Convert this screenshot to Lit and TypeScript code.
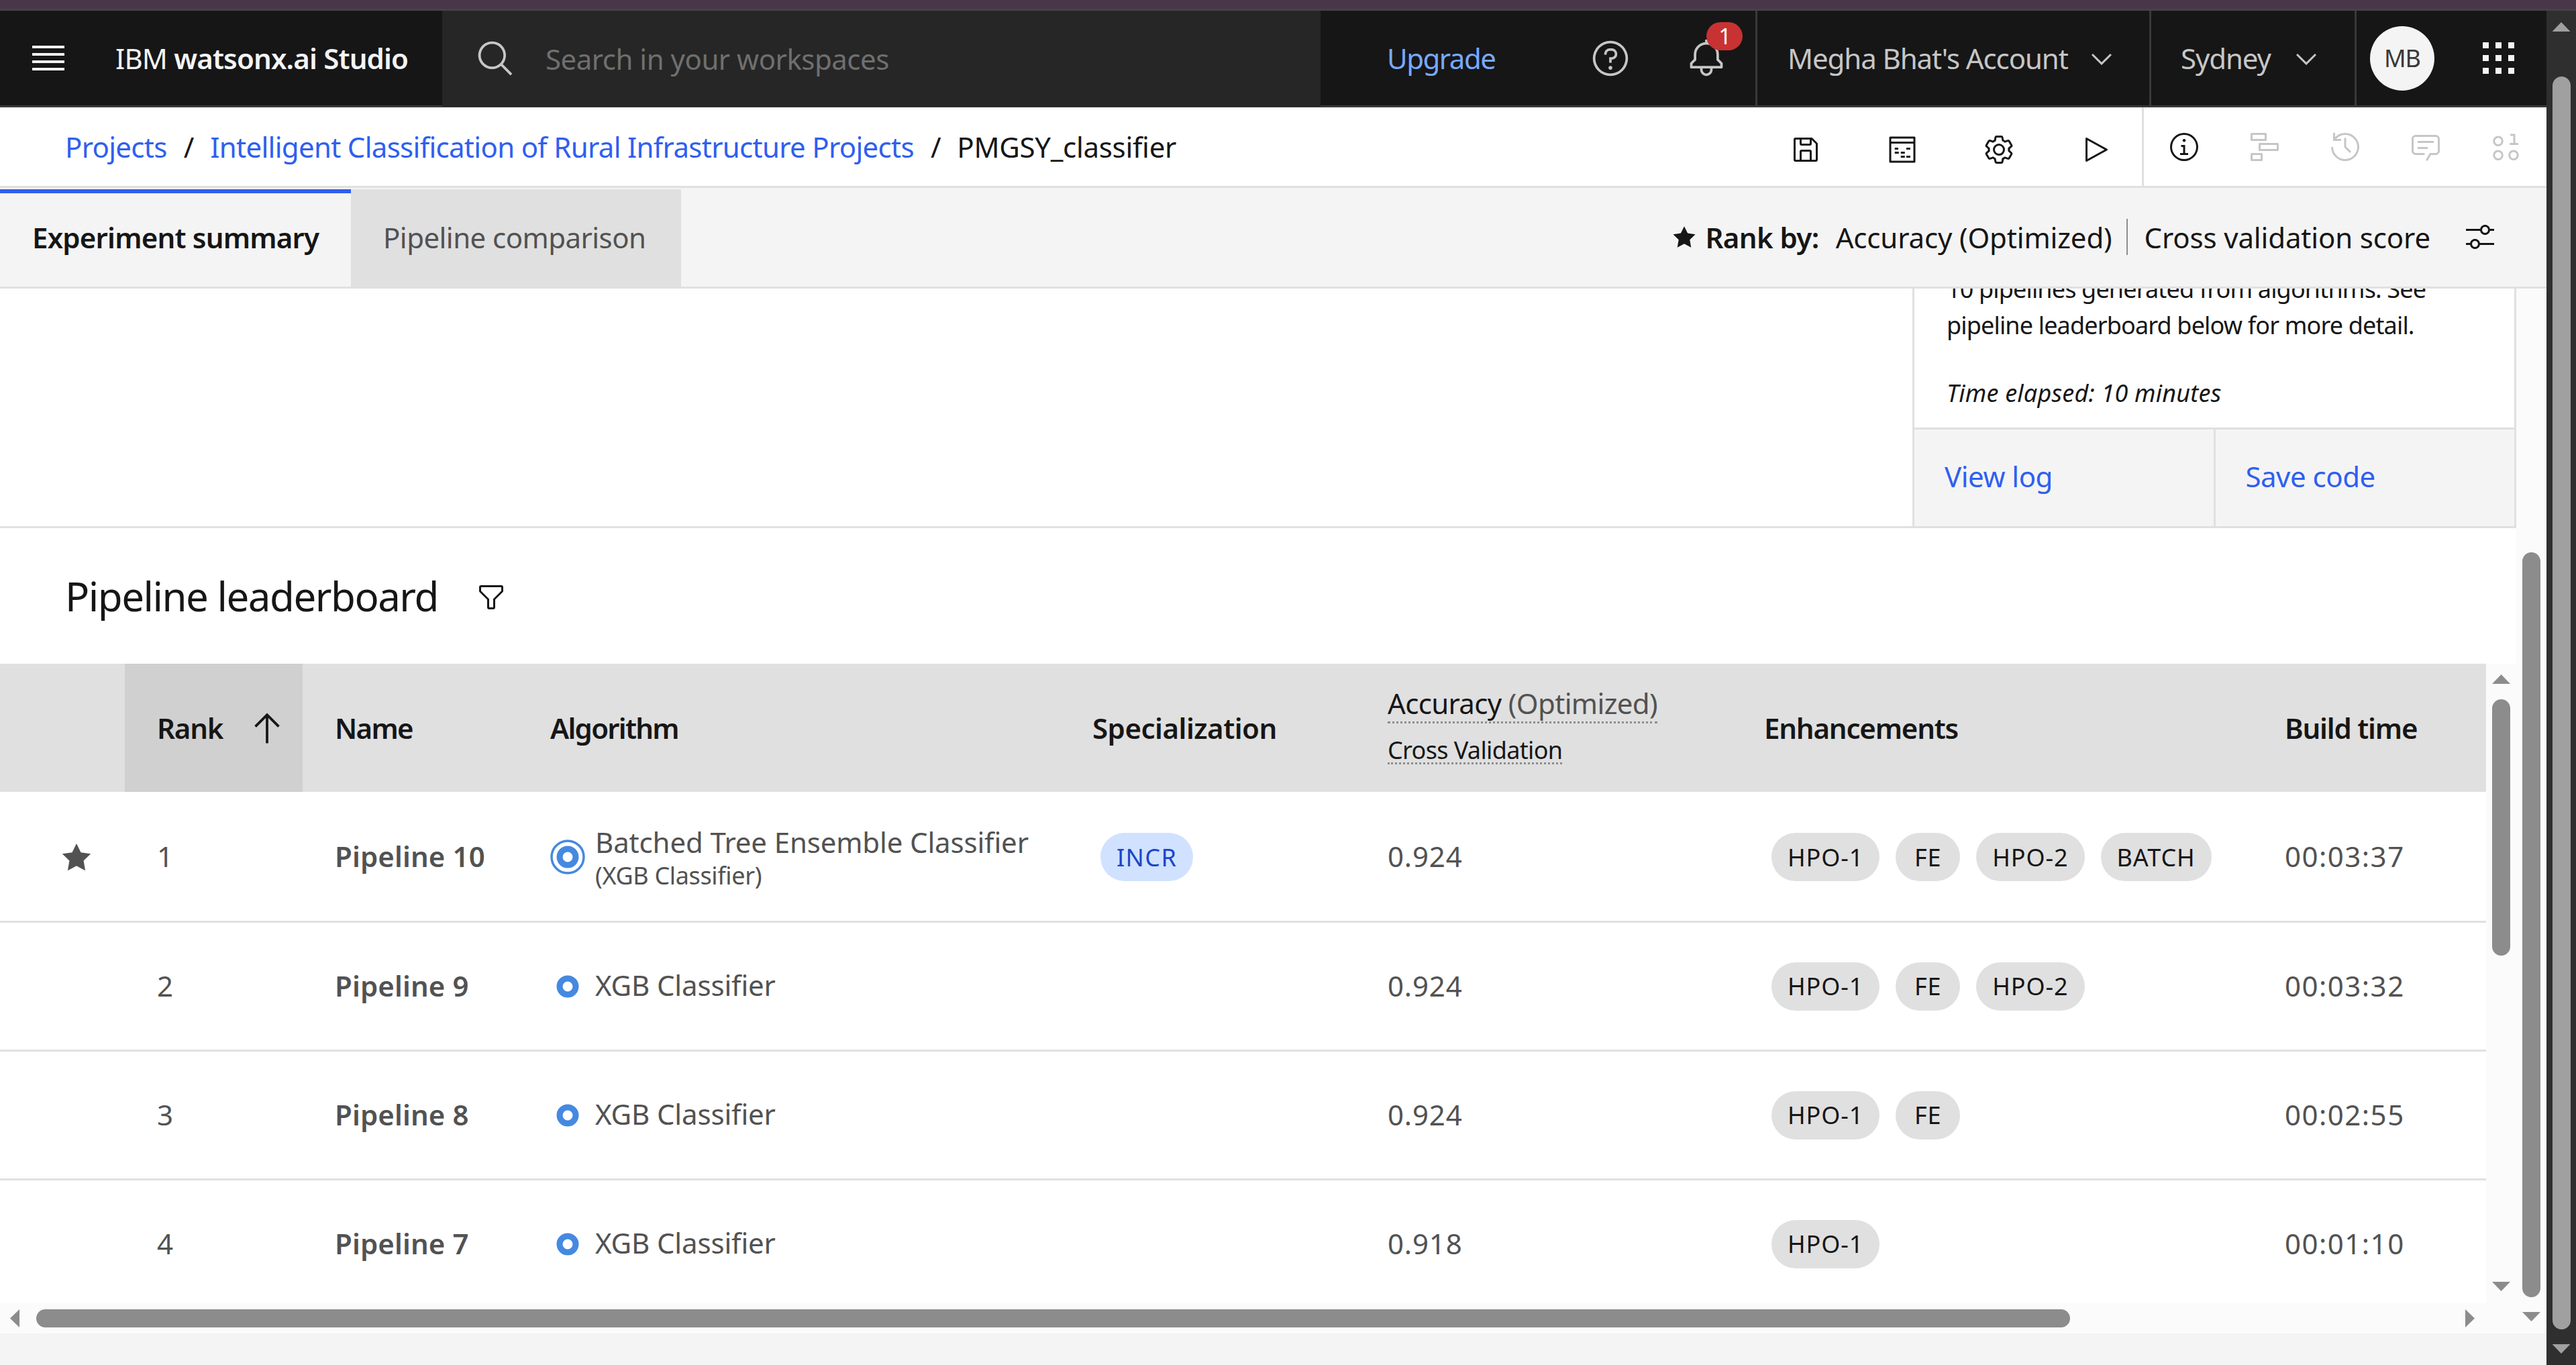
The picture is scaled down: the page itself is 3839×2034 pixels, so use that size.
import { LitElement, html, css, svg } from "lit";
import { customElement } from "lit/decorators.js";

const paths: Record<string, any> = {
  search: svg`<path d="M29,27.5859l-7.5521-7.5521a11.0177,11.0177,0,1,0-1.4141,1.4141L27.5859,29ZM4,13a9,9,0,1,1,9,9A9.01,9.01,0,0,1,4,13Z"/>`,
  help: svg`<path d="M16,2A14,14,0,1,0,30,16,14,14,0,0,0,16,2Zm0,26A12,12,0,1,1,28,16,12,12,0,0,1,16,28Z"/><circle cx="16" cy="23.5" r="1.5"/><path d="M17,8H15.5A4.49,4.49,0,0,0,11,12.5V13h2v-.5A2.5,2.5,0,0,1,15.5,10H17a2.5,2.5,0,0,1,0,5H15v4.5h2V17a4.5,4.5,0,0,0,0-9Z"/>`,
  bell: svg`<path d="M28.7071,19.293,26,16.5859V13a10.0136,10.0136,0,0,0-9-9.9492V1H15V3.0508A10.0136,10.0136,0,0,0,6,13v3.5859L3.2929,19.293A1,1,0,0,0,3,20v3a1,1,0,0,0,1,1h7v.7768a5.152,5.152,0,0,0,4.5,5.1987A5.0057,5.0057,0,0,0,21,25V24h7a1,1,0,0,0,1-1V20A1,1,0,0,0,28.7071,19.293ZM19,25a3,3,0,0,1-6,0V24h6Zm8-3H5V20.4141L7.707,17.707A.9994.9994,0,0,0,8,17V13a8,8,0,0,1,16,0v4a.9994.9994,0,0,0,.293.707L27,20.4141Z"/>`,
  chevron: svg`<path d="M16 22 6 12l1.4-1.4 8.6 8.6 8.6-8.6L26 12z"/>`,
  save: svg`<path d="M27.71,9.29l-5-5A1,1,0,0,0,22,4H6A2,2,0,0,0,4,6V26a2,2,0,0,0,2,2H26a2,2,0,0,0,2-2V10A1,1,0,0,0,27.71,9.29ZM12,6h8v4H12Zm8,20H12V18h8Zm2,0V18a2,2,0,0,0-2-2H12a2,2,0,0,0-2,2v8H6V6h4v4a2,2,0,0,0,2,2h8a2,2,0,0,0,2-2V6.41l4,4V26Z"/>`,
  sheet: svg`<path fill-rule="evenodd" d="M4,3H28a1,1,0,0,1,1,1V28a1,1,0,0,1-1,1H4a1,1,0,0,1-1-1V4A1,1,0,0,1,4,3ZM5,5V8H27V5ZM5,10V27H27V10Z"/><path d="M8.5 14h3.5v2H8.5zM20 14h4v2h-4zM8.5 18h4v2h-4zM14.5 18h4v2h-4zM14.5 22h4v2h-4zM20 22h4v2h-4z"/>`,
  gear: svg`<path d="M27,16.76c0-.25,0-.5,0-.76s0-.51,0-.77l1.92-1.68A2,2,0,0,0,29.3,11L26.94,7a2,2,0,0,0-1.73-1,2,2,0,0,0-.64.1l-2.43.82a11.35,11.35,0,0,0-1.31-.75l-.51-2.52a2,2,0,0,0-2-1.61H13.64a2,2,0,0,0-2,1.61l-.51,2.52a11.48,11.48,0,0,0-1.32.75L7.43,6.06A2,2,0,0,0,6.79,6,2,2,0,0,0,5.06,7L2.7,11a2,2,0,0,0,.41,2.51L5,15.24c0,.25,0,.5,0,.76s0,.51,0,.77L3.11,18.45A2,2,0,0,0,2.7,21L5.06,25a2,2,0,0,0,1.73,1,2,2,0,0,0,.64-.1l2.43-.82a11.35,11.35,0,0,0,1.31.75l.51,2.52a2,2,0,0,0,2,1.61h4.72a2,2,0,0,0,2-1.61l.51-2.52a11.48,11.48,0,0,0,1.32-.75l2.42.82a2,2,0,0,0,.64.1,2,2,0,0,0,1.73-1L29.3,21a2,2,0,0,0-.41-2.51ZM25.21,24l-3.43-1.16a8.86,8.86,0,0,1-2.71,1.57L18.36,28H13.64l-.71-3.55a9.36,9.36,0,0,1-2.7-1.57L6.79,24,4.43,20l2.72-2.4a8.9,8.9,0,0,1,0-3.13L4.43,12,6.79,8l3.43,1.16a8.86,8.86,0,0,1,2.71-1.57L13.64,4h4.72l.71,3.55a9.36,9.36,0,0,1,2.7,1.57L25.21,8,27.57,12l-2.72,2.4a8.9,8.9,0,0,1,0,3.13L27.57,20Z"/><path d="M16,22a6,6,0,1,1,6-6A5.94,5.94,0,0,1,16,22Zm0-10a3.91,3.91,0,0,0-4,4,3.91,3.91,0,0,0,4,4,3.91,3.91,0,0,0,4-4A3.91,3.91,0,0,0,16,12Z"/>`,
  play: svg`<path d="M7,28a1,1,0,0,1-1-1V5a1,1,0,0,1,1.4819-.8763l20,11a1,1,0,0,1,0,1.7525l-20,11A1.0005,1.0005,0,0,1,7,28ZM8,6.6909V25.3091L24.9248,16Z"/>`,
  info: svg`<path d="M17 22v-8h-4v2h2v6h-3v2h8v-2h-3z"/><path d="M16 8a1.5 1.5 0 1 0 1.5 1.5A1.5 1.5 0 0 0 16 8z"/><path d="M16 30a14 14 0 1 1 14-14 14 14 0 0 1-14 14zm0-26a12 12 0 1 0 12 12A12 12 0 0 0 16 4z"/>`,
  gantt: svg`<path fill-rule="evenodd" d="M3,2H17a1,1,0,0,1,1,1V9a1,1,0,0,1-1,1H3A1,1,0,0,1,2,9V3A1,1,0,0,1,3,2ZM4,4V8H16V4ZM11,12H29a1,1,0,0,1,1,1v6a1,1,0,0,1-1,1H11a1,1,0,0,1-1-1V13A1,1,0,0,1,11,12Zm1,2v4H28V14ZM3,22H13a1,1,0,0,1,1,1v6a1,1,0,0,1-1,1H3a1,1,0,0,1-1-1V23A1,1,0,0,1,3,22Zm1,2v4h8V24Z"/>`,
  history: svg`<path d="M20.59 22 15 16.41V7h2v8.58l5 5.01L20.59 22z"/><path d="M16 2A13.94 13.94 0 0 0 6 6.23V2H4v8h8V8H7.08A12 12 0 1 1 4 16H2A14 14 0 1 0 16 2z"/>`,
  chat: svg`<path d="M17.74,30,16,29l4-7h6a2,2,0,0,0,2-2V8a2,2,0,0,0-2-2H6A2,2,0,0,0,4,8V20a2,2,0,0,0,2,2h9v2H6a4,4,0,0,1-4-4V8A4,4,0,0,1,6,4H26a4,4,0,0,1,4,4V20a4,4,0,0,1-4,4H21.16Z"/><path d="M8 10h16v2H8zM8 16h10v2H8z"/>`,
  data: svg`<path fill-rule="evenodd" d="M8,5a5.2,5.2,0,1,1-5.2,5.2A5.2,5.2,0,0,1,8,5Zm0,2a3.2,3.2,0,1,0,3.2,3.2A3.2,3.2,0,0,0,8,7ZM8,19a5.2,5.2,0,1,1-5.2,5.2A5.2,5.2,0,0,1,8,19Zm0,2a3.2,3.2,0,1,0,3.2,3.2A3.2,3.2,0,0,0,8,21ZM23.3,19a5.2,5.2,0,1,1-5.2,5.2A5.2,5.2,0,0,1,23.3,19Zm0,2a3.2,3.2,0,1,0,3.2,3.2A3.2,3.2,0,0,0,23.3,21Z"/><path d="M23 12V5h-3V3h5v9h3v2h-8.500v-2z"/>`,
  adjust: svg`<path d="M30,8h-4.1c-0.5-2.3-2.5-4-4.9-4s-4.4,1.7-4.9,4H2v2h14.1c0.5,2.3,2.5,4,4.9,4s4.4-1.7,4.9-4H30V8z M21,12c-1.7,0-3-1.3-3-3s1.3-3,3-3s3,1.3,3,3S22.7,12,21,12z"/><path d="M2,24h4.1c0.5,2.3,2.5,4,4.9,4s4.4-1.7,4.9-4H30v-2H15.9c-0.5-2.3-2.5-4-4.9-4s-4.4,1.7-4.9,4H2V24z M11,20c1.7,0,3,1.3,3,3s-1.3,3-3,3s-3-1.3-3-3S9.3,20,11,20z"/>`,
  filter: svg`<path d="M18,28H14a2,2,0,0,1-2-2V18.41L4.59,11A2,2,0,0,1,4,9.59V6A2,2,0,0,1,6,4H26a2,2,0,0,1,2,2V9.59A2,2,0,0,1,27.41,11L20,18.41V26A2,2,0,0,1,18,28ZM6,6V9.59l8,8V26h4V17.59l8-8V6Z"/>`,
  arrowUp: svg`<path d="M16 4 6 14l1.41 1.41L15 7.83V28h2V7.83l7.59 7.58L26 14 16 4z"/>`,
  star: svg`<path d="M16 2l-4.55 9.22-10.17 1.47 7.36 7.18L6.9 30l9.1-4.78L25.1 30l-1.74-10.13 7.36-7.17-10.17-1.48z"/>`,
};

const icon = (name: string, cls = "i48") =>
  html`<svg class="icon ${cls}" viewBox="0 0 32 32" fill="currentColor">${paths[name]}</svg>`;

interface Row {
  rank: number;
  name: string;
  algo: string;
  sub?: string;
  spec?: string;
  acc: string;
  tags: string[];
  time: string;
}

const rows: Row[] = [
  { rank: 1, name: "Pipeline 10", algo: "Batched Tree Ensemble Classifier", sub: "(XGB Classifier)", spec: "INCR", acc: "0.924", tags: ["HPO-1", "FE", "HPO-2", "BATCH"], time: "00:03:37" },
  { rank: 2, name: "Pipeline 9", algo: "XGB Classifier", acc: "0.924", tags: ["HPO-1", "FE", "HPO-2"], time: "00:03:32" },
  { rank: 3, name: "Pipeline 8", algo: "XGB Classifier", acc: "0.924", tags: ["HPO-1", "FE"], time: "00:02:55" },
  { rank: 4, name: "Pipeline 7", algo: "XGB Classifier", acc: "0.918", tags: ["HPO-1"], time: "00:01:10" },
];

@customElement("app-root")
export class AppRoot extends LitElement {
  static styles = css`
    :host {
      display: block;
      width: 100%;
      height: 100vh;
      overflow: hidden;
      background: #fff;
      font-family: "Noto Sans", sans-serif;
      font-size: 42px;
      color: #161616;
      letter-spacing: -1.2px;
    }
    * { box-sizing: border-box; }
    .icon { display: block; flex: none; }
    .i48 { width: 48px; height: 48px; }
    .i60 { width: 60px; height: 60px; }

    .strip { height: 16px; background: #4a3649; border-bottom: 3px solid #444; }
    .frame { display: flex; height: 2018px; }
    .app { width: 3795px; display: flex; flex-direction: column; }

    /* outer browser scrollbar */
    .outer { width: 44px; background: #2f2f2f; display: flex; flex-direction: column; align-items: center; padding-top: 17px; }
    .outer .thumb { background: #a0a0a0; height: 1867px; margin: 67px 0 22px; }
    .thumb { width: 27px; border-radius: 14px; background: #8c8c8c; flex: none; }
    .up, .down, .left, .right { flex: none; background: #8c8c8c; }
    .outer .up, .outer .down { background: #a0a0a0; }
    .up { width: 27px; height: 14px; clip-path: polygon(50% 0, 100% 100%, 0 100%); }
    .down { width: 27px; height: 14px; clip-path: polygon(0 0, 100% 0, 50% 100%); }
    .left { width: 14px; height: 27px; clip-path: polygon(100% 0, 100% 100%, 0 50%); }
    .right { width: 14px; height: 27px; clip-path: polygon(0 0, 100% 50%, 0 100%); }

    /* header */
    .header { height: 144px; flex: none; background: #161616; border-bottom: 3px solid #393939; display: flex; align-items: stretch; }
    .menu { width: 144px; display: flex; flex-direction: column; justify-content: center; align-items: center; gap: 7px; }
    .menu i { display: block; width: 48px; height: 4px; background: #f4f4f4; }
    .brand { width: 515px; padding-left: 28px; display: flex; align-items: center; color: #f4f4f4; white-space: pre; letter-spacing: -0.85px; }
    .brand b { font-weight: 600; }
    .search { width: 1309px; height: 143px; background: #262626; display: flex; align-items: center; padding-left: 50px; color: #c6c6c6; }
    .search span { margin-left: 44px; color: #6f6f6f; letter-spacing: -0.5px; }
    .actions { display: flex; align-items: center; width: 648px; padding-left: 99px; color: #c6c6c6; }
    .upgrade { color: #78a9ff; width: 303px; letter-spacing: -1.5px; }
    .bell { position: relative; margin-left: 83px; }
    .badge { position: absolute; left: 30px; top: -24px; width: 54px; height: 42px; border-radius: 21px; background: #c83232; color: #fff; font-size: 33px; line-height: 42px; text-align: center; }
    .hcell { height: 141px; border-left: 3px solid #393939; display: flex; align-items: center; color: #c6c6c6; letter-spacing: -1.1px; }
    .account { width: 587px; padding-left: 45px; }
    .account .icon { margin-left: 26px; margin-top: 3px; }
    .region { width: 306px; padding-left: 44px; }
    .region .icon { margin-left: 29px; margin-top: 3px; }
    .tail { flex: 1; padding-left: 20px; }
    .avatar { width: 96px; height: 96px; border-radius: 50%; background: #f4f4f4; color: #393939; font-size: 36px; display: flex; align-items: center; justify-content: center; flex: none; }
    .apps { margin-left: 72px; display: grid; grid-template-columns: repeat(3, 9px); gap: 10px; }
    .apps i { width: 9px; height: 9px; background: #f4f4f4; }

    /* breadcrumb bar */
    .crumbs { height: 120px; flex: none; border-bottom: 3px solid #e0e0e0; display: flex; align-items: center; padding-left: 97px; }
    .crumbs a { color: #2f5ff0; letter-spacing: -0.7px; }
    .crumbs .sep { margin: 0 25px; }
    .crumbs .leaf { letter-spacing: -0.3px; }
    .tools { margin-left: auto; display: flex; align-items: center; height: 100%; }
    .tools .btn { width: 144px; display: flex; justify-content: center; padding-top: 8px; }
    .tools2 { width: 600px; height: 100%; display: flex; align-items: center; box-shadow: -3px 0 #e0e0e0; }
    .tools2 .btn { width: 120px; display: flex; justify-content: center; color: #c6c6c6; padding-top: 0; }
    .tools2 .btn.on { color: #161616; }

    /* tabs */
    .tabs { height: 150px; flex: none; background: #f4f4f4; border-bottom: 3px solid #e0e0e0; padding-top: 2px; display: flex; align-items: stretch; }
    .tab { display: flex; align-items: center; padding: 0 0 3px 48px; }
    .tab.active { width: 523px; border-top: 6px solid #2f5ff0; font-weight: 600; padding-bottom: 9px; letter-spacing: -0.8px; }
    .tab.off { width: 492px; background: #e0e0e0; color: #525252; letter-spacing: -0.55px; }
    .rankby { margin-left: auto; display: flex; align-items: center; padding: 0 75px 3px 0; letter-spacing: -0.15px; }
    .rankby .star { width: 36px; height: 36px; }
    .rankby b { font-weight: 600; margin-left: 13px; margin-right: 25px; letter-spacing: -0.6px; }
    .rankby .bar { width: 2px; height: 54px; background: #8d8d8d; margin: 0 25px 0 21px; }
    .rankby .icon.adjust { margin-left: 50px; }

    /* content */
    .content { flex: 1; display: flex; min-height: 0; }
    .page { width: 3750px; display: flex; flex-direction: column; min-height: 0; }
    .vbar { width: 45px; background: #fbfbfb; flex: none; display: flex; flex-direction: column; align-items: center; }
    .vbar.page-bar { padding-top: 393px; }
    .vbar.page-bar .thumb { height: 1110px; margin-bottom: 22px; }
    .foot { height: 47px; flex: none; background: #f4f4f4; }

    .summary { height: 357px; flex: none; border-bottom: 3px solid #e0e0e0; display: flex; justify-content: flex-end; }
    .card { width: 900px; border-left: 3px solid #e0e0e0; border-right: 3px solid #e0e0e0; display: flex; flex-direction: column; margin-left: auto; }
    .card-body { flex: 1; overflow: hidden; font-size: 36px; line-height: 54px; padding-left: 48px; border-bottom: 3px solid #e0e0e0; white-space: nowrap; letter-spacing: -0.85px; }
    .card-body p { margin: 0; }
    .card-body p:first-child { margin-top: -26px; }
    .card-body p + p { margin-top: 47px; font-style: italic; letter-spacing: 0.2px; }
    .card-foot { height: 144px; flex: none; display: flex; background: #f4f4f4; color: #2f5ff0; letter-spacing: -0.5px; }
    .card-foot div { flex: 1; display: flex; align-items: center; padding: 0 0 6px 45px; }
    .card-foot div + div { border-left: 3px solid #e0e0e0; }

    .heading { height: 202px; flex: none; display: flex; align-items: center; padding-left: 97px; font-size: 60px; letter-spacing: -1.5px; }
    .heading .icon { margin-left: 55px; margin-top: 4px; }

    .tablewrap { height: 953px; flex: none; display: flex; overflow: hidden; }
    .table { width: 3705px; overflow: hidden; }
    .tr { display: grid; grid-template-columns: 186px 265px 319px 808px 440px 561px 776px 350px; }
    .th { height: 191px; background: #e0e0e0; font-weight: 600; }
    .th > div { display: flex; align-items: center; padding-left: 50px; }
    .th > .sorted { background: #d0d0d0; padding-left: 48px; }
    .th > .col-name { padding-left: 48px; letter-spacing: -1.75px; }
    .th > .col-algo { letter-spacing: -1.75px; }
    .th > .col-spec { letter-spacing: -0.5px; }
    .sorted .icon { margin-left: auto; margin-right: 23px; }
    .th > .metric { flex-direction: column; align-items: flex-start; justify-content: center; font-weight: 400; padding-bottom: 10px; letter-spacing: -0.65px; }
    .metric span { display: block; border-bottom: 3px dotted #8d8d8d; }
    .metric .main { line-height: 54px; }
    .metric em { font-style: normal; color: #525252; }
    .metric .second { font-size: 36px; line-height: 36px; margin-top: 22px; letter-spacing: -0.65px; }
    .td { height: 192px; border-bottom: 3px solid #e0e0e0; color: #525252; }
    .td.first { height: 195px; padding-top: 2px; }
    .td > div { display: flex; align-items: center; padding-left: 50px; }
    .td > .fav { padding-left: 91px; }
    .fav .icon { width: 46px; height: 46px; }
    .td > .num { padding: 0 0 3px 48px; }
    .td > .nm { font-weight: 600; padding: 0 0 3px 48px; letter-spacing: 0.1px; }
    .td > .acc { letter-spacing: 0.85px; padding-bottom: 3px; }
    .td > .time { letter-spacing: 1.5px; padding-bottom: 3px; }
    .algo svg { flex: none; }
    .algo .txt { margin-left: 15px; line-height: 50px; letter-spacing: -0.15px; padding-bottom: 3px; }
    .algo .txt small { display: block; font-size: 36px; letter-spacing: -0.35px; }
    .algo .txt.two { padding: 6px 0 0; }
    .tag { height: 72px; min-width: 96px; border-radius: 36px; padding: 0 24px; display: flex; align-items: center; justify-content: center; font-size: 36px; background: #e0e0e0; color: #161616; letter-spacing: 0.9px; flex: none; }
    .tag.blue { background: #d0e2ff; color: #1c45c9; margin-left: 12px; letter-spacing: 1.4px; }
    .tags { gap: 24px; }
    .td > .tags { padding-left: 61px; }

    .tablewrap .vbar { padding-top: 16px; }
    .tablewrap .vbar .thumb { height: 382px; margin: 23px 0 486px; }

    .hbar { height: 45px; flex: none; background: #fbfbfb; display: flex; align-items: center; padding-left: 15px; }
    .hbar .thumb { width: 3031px; height: 27px; margin: 0 589px 0 25px; }
  `;

  private renderRow(r: Row) {
    return html`<div class="tr td ${r.rank === 1 ? "first" : ""}">
      <div class="fav">${r.rank === 1 ? icon("star") : ""}</div>
      <div class="num">${r.rank}</div>
      <div class="nm">${r.name}</div>
      <div class="algo">
        ${r.sub
          ? html`<svg width="52" height="52" viewBox="0 0 52 52"><circle cx="26" cy="26" r="24" fill="none" stroke="#4589e0" stroke-width="3.5"/><circle cx="26" cy="26" r="12" fill="none" stroke="#4589e0" stroke-width="9"/></svg>`
          : html`<svg width="52" height="52" viewBox="0 0 52 52"><circle cx="26" cy="26" r="12" fill="none" stroke="#4589e0" stroke-width="9"/></svg>`}
        <div class="txt ${r.sub ? "two" : ""}">${r.algo}${r.sub ? html`<small>${r.sub}</small>` : ""}</div>
      </div>
      <div>${r.spec ? html`<span class="tag blue">${r.spec}</span>` : ""}</div>
      <div class="acc">${r.acc}</div>
      <div class="tags">${r.tags.map((t) => html`<span class="tag">${t}</span>`)}</div>
      <div class="time">${r.time}</div>
    </div>`;
  }

  render() {
    return html`
      <div class="strip"></div>
      <div class="frame">
        <div class="app">
          <div class="header">
            <div class="menu"><i></i><i></i><i></i><i></i></div>
            <div class="brand">IBM <b>watsonx.ai Studio</b></div>
            <div class="search">${icon("search", "i60")}<span>Search in your workspaces</span></div>
            <div class="actions">
              <div class="upgrade">Upgrade</div>
              ${icon("help", "i60")}
              <div class="bell">${icon("bell", "i60")}<div class="badge">1</div></div>
            </div>
            <div class="hcell account">Megha Bhat's Account ${icon("chevron")}</div>
            <div class="hcell region">Sydney ${icon("chevron")}</div>
            <div class="hcell tail">
              <div class="avatar">MB</div>
              <div class="apps">${[...Array(9)].map(() => html`<i></i>`)}</div>
            </div>
          </div>
          <div class="crumbs">
            <a>Projects</a><span class="sep">/</span>
            <a>Intelligent Classification of Rural Infrastructure Projects</a><span class="sep">/</span>
            <span class="leaf">PMGSY_classifier</span>
            <div class="tools">
              <div class="btn">${icon("save")}</div>
              <div class="btn">${icon("sheet")}</div>
              <div class="btn">${icon("gear")}</div>
              <div class="btn">${icon("play")}</div>
              <div class="tools2">
                <div class="btn on">${icon("info")}</div>
                <div class="btn">${icon("gantt")}</div>
                <div class="btn">${icon("history")}</div>
                <div class="btn">${icon("chat")}</div>
                <div class="btn">${icon("data")}</div>
              </div>
            </div>
          </div>
          <div class="tabs">
            <div class="tab active">Experiment summary</div>
            <div class="tab off">Pipeline comparison</div>
            <div class="rankby">
              ${icon("star", "star")}
              <b>Rank by:</b>
              <span>Accuracy (Optimized)</span>
              <div class="bar"></div>
              <span>Cross validation score</span>
              ${icon("adjust", "i48 adjust")}
            </div>
          </div>
          <div class="content">
            <div class="page">
              <div class="summary">
                <div class="card">
                  <div class="card-body">
                    <p>10 pipelines generated from algorithms. See<br />pipeline leaderboard below for more detail.</p>
                    <p>Time elapsed: 10 minutes</p>
                  </div>
                  <div class="card-foot"><div>View log</div><div>Save code</div></div>
                </div>
              </div>
              <div class="heading">Pipeline leaderboard ${icon("filter")}</div>
              <div class="tablewrap">
                <div class="table">
                  <div class="tr th">
                    <div></div>
                    <div class="sorted">Rank ${icon("arrowUp", "i60")}</div>
                    <div class="col-name">Name</div>
                    <div class="col-algo">Algorithm</div>
                    <div class="col-spec">Specialization</div>
                    <div class="metric">
                      <span class="main">Accuracy <em>(Optimized)</em></span>
                      <span class="second">Cross Validation</span>
                    </div>
                    <div>Enhancements</div>
                    <div>Build time</div>
                  </div>
                  ${rows.map((r) => this.renderRow(r))}
                </div>
                <div class="vbar">
                  <div class="up"></div>
                  <div class="thumb"></div>
                  <div class="down"></div>
                </div>
              </div>
              <div class="hbar">
                <div class="left"></div>
                <div class="thumb"></div>
                <div class="right"></div>
              </div>
            </div>
            <div class="vbar page-bar">
              <div class="thumb"></div>
              <div class="down"></div>
            </div>
          </div>
          <div class="foot"></div>
        </div>
        <div class="outer">
          <div class="up"></div>
          <div class="thumb"></div>
          <div class="down"></div>
        </div>
      </div>
    `;
  }
}
